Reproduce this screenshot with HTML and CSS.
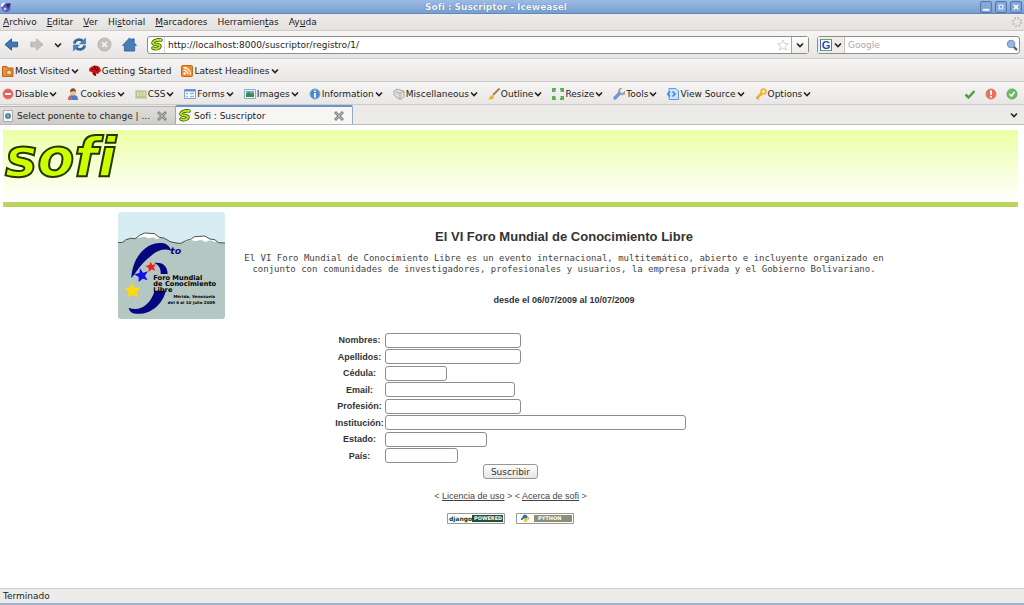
FILE: index.html
```html
<!DOCTYPE html>
<html lang="es">
<head>
<meta charset="utf-8">
<title>Sofi : Suscriptor</title>
<link rel="stylesheet" href="styles.css">
</head>
<body>
<svg class="defs" aria-hidden="true">
  <symbol id="chev" viewBox="0 0 8 6"><path d="M1 1.500l3 3 3-3" fill="none" stroke="#222" stroke-width="1.600"/></symbol>
  <symbol id="sofi" viewBox="0 0 12 13"><path d="M10 2C7 1 2 3 2 5s7 1 7 3-4 4-7 2" fill="none" stroke="#344800" stroke-width="3.400" stroke-linecap="round"/><path d="M10 2C7 1 2 3 2 5s7 1 7 3-4 4-7 2" fill="none" stroke="#b9ee12" stroke-width="2" stroke-linecap="round"/></symbol>
  <symbol id="cross" viewBox="0 0 10 10"><path d="M2 2l6 6M8 2L2 8" stroke="#8b8e88" stroke-width="3" stroke-linecap="square"/><path d="M2 2l6 6M8 2L2 8" stroke="#b5b8b1" stroke-width="1"/></symbol>
</svg>

<header class="titlebar">
  <svg class="app-icon" viewBox="0 0 12 12"><circle cx="6" cy="6.500" r="4.500" fill="#5b55b8"/><path d="M1 5C1 2 4 1 6 2c-2 1-3 2-3 4z" fill="#fff"/><path d="M6 4c2-2 4-2 5-1-1 1-1 3-3 4z" fill="#2c2a86"/><circle cx="5" cy="8" r="1.500" fill="#c8c6f2"/></svg>
  <span class="window-title">Sofi : Suscriptor - Iceweasel</span>
  <div class="window-buttons">
    <button aria-label="Minimizar"><svg viewBox="0 0 11 11"><path d="M2 8.500h7" stroke="#fff" stroke-width="2"/></svg></button>
    <button aria-label="Maximizar"><svg viewBox="0 0 11 11"><path d="M3.500 3.500h4v4h-4z" fill="none" stroke="#dce9fa" stroke-width="1.500"/></svg></button>
    <button aria-label="Cerrar"><svg viewBox="0 0 11 11"><path d="M3 3l5 5M8 3L3 8" stroke="#fff" stroke-width="1.800"/></svg></button>
  </div>
</header>

<nav class="menubar">
  <button><u>A</u>rchivo</button>
  <button><u>E</u>ditar</button>
  <button><u>V</u>er</button>
  <button>Hi<u>s</u>torial</button>
  <button><u>M</u>arcadores</button>
  <button>Herramien<u>t</u>as</button>
  <button>Ay<u>u</u>da</button>
  <svg class="throbber" viewBox="0 0 12 12"><circle cx="6" cy="6" r="4" fill="none" stroke="#b9b7b4" stroke-width="2" stroke-dasharray="1.600 1.540"/></svg>
</nav>

<div class="navbar">
  <div class="nav-buttons">
    <button aria-label="Atrás"><svg viewBox="0 0 16 16"><path d="M1 8l7-6v3.500h6.500v5H8V14z" fill="#3f78b5" stroke="#275686"/></svg></button>
    <button class="forward" aria-label="Adelante"><svg viewBox="0 0 16 16"><path d="M15 8L8 2v3.500H2v5h6V14z" fill="#c3c2c0" stroke="#b4b3b1"/></svg></button>
    <button class="history" aria-label="Historial reciente"><svg class="chev"><use href="#chev"/></svg></button>
    <button aria-label="Recargar"><svg viewBox="0 0 16 16"><path d="M2.500 7C3 2.500 9 1.500 11.500 4.500M13.500 9C13 13.500 7 14.500 4.500 11.500" fill="none" stroke="#33699f" stroke-width="3"/><path d="M14.500 1v6.500H8zM1.500 15V8.500H8z" fill="#4b83bd" stroke="#33699f" stroke-width=".5"/></svg></button>
    <button class="stop" aria-label="Detener"><svg viewBox="0 0 16 16"><circle cx="8" cy="8" r="7" fill="#c4c1c0" stroke="#b8b5b4"/><path d="M5.500 5.500l5 5M10.500 5.500l-5 5" stroke="#f2f1f0" stroke-width="2"/></svg></button>
    <button class="home" aria-label="Inicio"><svg viewBox="0 0 16 16"><path d="M8 1l2.500 2.500V2h2.500v4l2.500 3h-2v6h-11V9h-2z" fill="#467db9" stroke="#2c5a8d" stroke-width=".8"/></svg></button>
  </div>
  <div class="urlbar">
    <svg class="favicon"><use href="#sofi"/></svg>
    <input type="text" aria-label="Dirección" value="http://localhost:8000/suscriptor/registro/1/">
    <button class="star" aria-label="Añadir a marcadores"><svg viewBox="0 0 14 14"><path d="M7 1l1.700 4.200 4.500.3-3.500 2.900 1.200 4.500L7 10.400l-3.900 2.500 1.200-4.500L.8 5.500l4.500-.3z" fill="#fff" stroke="#c9c9c9"/></svg></button>
    <button class="url-drop" aria-label="Mostrar direcciones"><svg class="chev"><use href="#chev"/></svg></button>
  </div>
  <div class="searchbar">
    <button class="engine" aria-label="Motor de búsqueda"><span class="g-icon">G</span><svg class="chev"><use href="#chev"/></svg></button>
    <input type="text" aria-label="Buscar" placeholder="Google">
    <button class="go" aria-label="Buscar ahora"><svg viewBox="0 0 13 13"><path d="M8 8l4 4" stroke="#666" stroke-width="2.500"/><circle cx="5.500" cy="5.500" r="4" fill="#8dbaf0" stroke="#8697b5" stroke-width="1.300"/></svg></button>
  </div>
</div>

<div class="bookmarks">
  <button><svg class="ico" viewBox="0 0 12 12"><path d="M.5 1.500H5L6 3h5v8.500H.5z" fill="#e88b3a" stroke="#bd6317"/><circle cx="7" cy="7.500" r="2.500" fill="#f7d6a4" stroke="#b66a2a"/></svg><span>Most Visited</span><svg class="chev"><use href="#chev"/></svg></button>
  <button><svg class="ico" viewBox="0 0 12 12"><path d="M0 4l2-2 3-1.500 4 .5 2 2 1 3-2 1.500L9 9 7 8.500l-.5 2.500L4 10 3 7 .5 6.500z" fill="#d01012"/><path d="M2 3l2 2M5.500 1l1 4M9 2L7.500 6M5 8l2 3" stroke="#380000" stroke-width="1"/></svg><span>Getting Started</span></button>
  <button><svg class="ico" viewBox="0 0 12 12"><rect x=".5" y=".5" width="11" height="11" rx="1" fill="#f4862b" stroke="#cc681b"/><circle cx="3.500" cy="8.500" r="1.200" fill="#fff"/><path d="M2.500 5.200a4.200 4.200 0 0 1 4.300 4.300M2.500 2.500a7 7 0 0 1 7 7" fill="none" stroke="#fff" stroke-width="1.300"/></svg><span>Latest Headlines</span><svg class="chev"><use href="#chev"/></svg></button>
</div>

<div class="devbar">
  <button><svg class="ico" viewBox="0 0 12 12"><circle cx="6" cy="6" r="5" fill="#e96052" stroke="#e08078"/><path d="M3 6h6" stroke="#fff" stroke-width="2"/></svg><span>Disable</span><svg class="chev"><use href="#chev"/></svg></button>
  <button><svg class="ico" viewBox="0 0 12 12"><path d="M1 12c0-4 2-5 5-5s5 1 5 5z" fill="#477fce"/><circle cx="6" cy="4.500" r="3" fill="#f2be8d"/><path d="M3 4c0-5 6-5 6 0L7 3z" fill="#874b22"/><path d="M1 9h4v3H1z" fill="#e2604e"/></svg><span>Cookies</span><svg class="chev"><use href="#chev"/></svg></button>
  <button><svg class="ico" viewBox="0 0 12 12"><path d="M.5 2.500h11v8H.5z" fill="#b9c78f" stroke="#cfd5b5"/><path d="M2 5h8M2 7h8" stroke="#edf2da" stroke-dasharray="2 1"/></svg><span>CSS</span><svg class="chev"><use href="#chev"/></svg></button>
  <button><svg class="ico" viewBox="0 0 12 12"><path d="M.5 1.500h11v9H.5z" fill="#fff" stroke="#7ea0d4"/><path d="M1 2.500h10" stroke="#5d8dd2" stroke-width="2"/><path d="M2 5.500h2M2 8.500h2M6 5.500h4M6 8.500h4" stroke="#8eb0de" stroke-width="1.500"/></svg><span>Forms</span><svg class="chev"><use href="#chev"/></svg></button>
  <button><svg class="ico" viewBox="0 0 12 12"><path d="M.5 1.500h11v9H.5z" fill="#eef4fb" stroke="#8ba9cf"/><path d="M2 3h8v6H2z" fill="#6ea1df"/><path d="M2 9V6l3-2 2 2 3-1v4z" fill="#3b8d36"/></svg><span>Images</span><svg class="chev"><use href="#chev"/></svg></button>
  <button><svg class="ico" viewBox="0 0 12 12"><circle cx="6" cy="6" r="5" fill="#4d8bce" stroke="#7ba7d6"/><path d="M6 2.500v1.500M6 5v4.500" stroke="#fff" stroke-width="1.800"/></svg><span>Information</span><svg class="chev"><use href="#chev"/></svg></button>
  <button><svg class="ico" viewBox="0 0 12 12"><path d="M1 3l3-2 3 1 4 1v6l-4 2.500L3 9 1 7z" fill="#dedddd" stroke="#aaa"/><path d="M3 4l4 1.500L11 3M7 5.500V11" fill="none" stroke="#aaa"/></svg><span>Miscellaneous</span><svg class="chev"><use href="#chev"/></svg></button>
  <button><svg class="ico" viewBox="0 0 12 12"><path d="M11.500.5L5 7" stroke="#a47a43" stroke-width="1.800"/><path d="M0 11c2 0 2-4 4-4l2 2c0 2-3 3-6 2z" fill="#e9b52d"/></svg><span>Outline</span><svg class="chev"><use href="#chev"/></svg></button>
  <button><svg class="ico" viewBox="0 0 12 12"><path d="M0 0h4v1.500L3 3 4 4H0zM8 0h4v4H8l1-1-1-1.500zM0 8h4L3 9l1 1.500V12H0zM8 8h4v4H8v-1.500L9 9z" fill="#62ab5e"/></svg><span>Resize</span><svg class="chev"><use href="#chev"/></svg></button>
  <button><svg class="ico" viewBox="0 0 12 12"><path d="M9 0L7 2v3l3 0 2-2v3L9 7 6 6 5 5l1-4z" fill="#aaa" stroke="#888" stroke-width=".5"/><path d="M2 10l4-4" stroke="#6f98dc" stroke-width="3.500" stroke-linecap="round"/></svg><span>Tools</span><svg class="chev"><use href="#chev"/></svg></button>
  <button><svg class="ico" viewBox="0 0 12 12"><path d="M2 .5h7L11.500 3v8.500H2z" fill="#cfe3fa" stroke="#5d9be2"/><path d="M3 3.500L.5 6 3 8.500M5.500 3.500L8 6 5.500 8.500" fill="none" stroke="#3585e0" stroke-width="1.500"/></svg><span>View Source</span><svg class="chev"><use href="#chev"/></svg></button>
  <button><svg class="ico" viewBox="0 0 12 12"><path d="M1.500 10.500L7 5" stroke="#eeae2d" stroke-width="2.500"/><path d="M2 10l2 1.500" stroke="#d6911a"/><circle cx="8.500" cy="3.500" r="2.300" fill="#fff" stroke="#efb63a" stroke-width="2"/></svg><span>Options</span><svg class="chev"><use href="#chev"/></svg></button>
  <div class="dev-status">
    <svg class="ico" viewBox="0 0 12 12"><path d="M1.500 6.500L4.500 9.500 10.500 3" fill="none" stroke="#4ba347" stroke-width="2.500"/></svg>
    <svg class="ico" viewBox="0 0 12 12"><circle cx="6" cy="6" r="5" fill="#ef6b59" stroke="#e8776a"/><path d="M6 2.500v4.500M6 8v1.500" stroke="#fff" stroke-width="2"/></svg>
    <svg class="ico" viewBox="0 0 12 12"><circle cx="6" cy="6" r="5" fill="#6cba64" stroke="#5fad58"/><path d="M3.500 6l2 2 3-4" fill="none" stroke="#fff" stroke-width="1.500"/></svg>
  </div>
</div>

<div class="tabs">
  <button class="tab">
    <svg class="ico" viewBox="0 0 12 12"><path d="M1.500.5h9v11h-9z" fill="#f4f6f6" stroke="#aaa"/><circle cx="6" cy="6" r="3" fill="#5287ad"/><path d="M5 4l2 1-1 3z" fill="#9bc491"/></svg>
    <span>Select ponente to change | ...</span><svg class="close"><use href="#cross"/></svg>
  </button>
  <button class="tab active">
    <svg class="favicon"><use href="#sofi"/></svg>
    <span>Sofi : Suscriptor</span><svg class="close"><use href="#cross"/></svg>
  </button>
  <button class="all-tabs" aria-label="Listar pestañas"><svg class="chev"><use href="#chev"/></svg></button>
</div>

<main class="page">
  <div class="banner"><span class="logo">sofi</span></div>

  <section class="event">
    <svg class="poster" viewBox="24 21 321 321" role="img" aria-label="6to Foro Mundial de Conocimiento Libre">
      <rect x="24" y="21" width="321" height="321" rx="10" fill="#d7edf3"/>
      <path d="M24 113L38 112 48 104 62 100 76 101 90 90 104 84 134 86 146 96 164 100 180 110 198 114 212 115 230 106 242 103 254 95 284 93 300 102 314 104 326 113 345 114V332a10 10 0 0 1-10 10H34a10 10 0 0 1-10-10z" fill="#b5c7c3"/>
      <path d="M80 99L90 90 104 84 134 86 146 96 160 100 150 99 140 103 130 97 116 100 104 95zM219 112L230 106 242 103 254 95 284 93 300 102 314 104 324 111 312 110 300 106 286 111 272 104 258 109 242 105z" fill="#fff"/>
      <path d="M24 113L38 112 48 104 62 100 76 101 90 90 104 84 134 86 146 96 164 100 180 110 198 114 212 115 230 106 242 103 254 95 284 93 300 102 314 104 326 113 345 114" fill="none" stroke="#333" stroke-width="2.500"/>
      <path d="M64 220C67 155 110 109 156 114c14 2 24 10 27 23-20-8-40-1-56 12-28 21-42 42-63 71z" fill="#06067f"/>
      <path d="M132 174c26-5 41 10 41 33h-21c1-15-4-27-20-33zM134 257h34c-12 46-52 74-91 69-12-1-19-7-21-18 33 14 66-10 78-51z" fill="#06067f"/>
      <path d="M122 170l5 10 11-2-7 9 5 10-11-4-9 8v-12l-10-6 12-3z" fill="#f81819"/>
      <path d="M90 190l9 13 15-4-9 13 8 14-15-5-12 10 0-15-14-8 16-4z" fill="#1010ed"/>
      <path d="M67 233l7 15 18 0-13 13 5 17-16-9-15 9 3-18-13-12 18-1z" fill="#ffdc08"/>
      <text class="poster-to" x="181" y="148">to</text>
      <g class="poster-name"><text x="130" y="224">Foro Mundial</text><text x="130" y="242">de Conocimiento</text><text x="130" y="261">Libre</text></g>
      <g class="poster-date"><text x="315" y="280">Mérida, Venezuela</text><text x="315" y="297">del 6 al 10 julio 2009</text></g>
    </svg>
    <div class="event-text">
      <h1>El VI Foro Mundial de Conocimiento Libre</h1>
      <p class="summary">El VI Foro Mundial de Conocimiento Libre es un evento internacional, multitemático, abierto e incluyente organizado en conjunto con comunidades de investigadores, profesionales y usuarios, la empresa privada y el Gobierno Bolivariano.</p>
      <p class="dates">desde el 06/07/2009 al 10/07/2009</p>
    </div>
  </section>

  <form class="register">
    <table>
      <tr><th><label for="nombres">Nombres:</label></th><td><input class="w-name" id="nombres" type="text"></td></tr>
      <tr><th><label for="apellidos">Apellidos:</label></th><td><input class="w-name" id="apellidos" type="text"></td></tr>
      <tr><th><label for="cedula">Cédula:</label></th><td><input class="w-id" id="cedula" type="text"></td></tr>
      <tr><th><label for="email">Email:</label></th><td><input class="w-email" id="email" type="text"></td></tr>
      <tr><th><label for="profesion">Profesión:</label></th><td><input class="w-name" id="profesion" type="text"></td></tr>
      <tr><th><label for="institucion">Institución:</label></th><td><input class="w-org" id="institucion" type="text"></td></tr>
      <tr><th><label for="estado">Estado:</label></th><td><input class="w-state" id="estado" type="text"></td></tr>
      <tr><th><label for="pais">País:</label></th><td><input class="w-country" id="pais" type="text"></td></tr>
    </table>
    <button type="submit">Suscribir</button>
  </form>

  <footer class="foot">
    <p>&lt; <a href="#licencia">Licencia de uso</a> &gt; &lt; <a href="#acerca">Acerca de sofi</a> &gt;</p>
    <div class="badges">
      <svg class="badge" viewBox="0 0 58 11" role="img" aria-label="django powered"><path d="M.5.500h57v10H.5z" fill="#fff" stroke="#999"/><path d="M25 2h31v7H25z" fill="#234f32"/><text class="b-django" x="2" y="8">django</text><text class="b-small" x="27" y="7">POWERED</text></svg>
      <svg class="badge" viewBox="0 0 58 11" role="img" aria-label="python"><path d="M.5.500h57v10H.5z" fill="#fff" stroke="#999"/><path d="M18 2h38v7H18z" fill="#8b8f78"/><path d="M7 5V3q2-2 4 0v2H8q-2 0-2 2-2-2 1-2z" fill="#356d9e" stroke="#356d9e"/><path d="M12 4q3 1 0 3h-1v1q-2 2-3 0V6h3q1 0 1-2z" fill="#f3c637" stroke="#f3c637" stroke-width=".5"/><text class="b-small" x="22" y="7">PYTHON</text></svg>
    </div>
  </footer>
</main>

<div class="statusbar">Terminado</div>
</body>
</html>
```
FILE: styles.css
```css
* { box-sizing: border-box; }

body {
  margin: 0;
  min-height: 100vh;
  display: flex;
  flex-direction: column;
  background: #fff;
  font: 9px/12px "DejaVu Sans", sans-serif;
  color: #1c1c1c;
}

button, input { font: inherit; color: inherit; margin: 0; }
button { padding: 0; border: 0; background: none; white-space: nowrap; }
svg { display: block; flex: none; }
.defs { position: absolute; width: 0; height: 0; }
.chev { width: 8px; height: 6px; }
.ico { width: 12px; height: 12px; }
.favicon { width: 12px; height: 13px; }

.titlebar {
  display: flex;
  align-items: center;
  height: 14px;
  padding: 0 2px 0 0;
  background: linear-gradient(#9cbce6, #799ecf);
  border-bottom: 1px solid #5f88bd;
}
.app-icon { width: 12px; height: 12px; }
.window-title {
  flex: 1;
  text-align: center;
  font-weight: bold;
  color: #f4f8ff;
  text-shadow: 0 0 1px #35557f;
}
.window-buttons { display: flex; gap: 3px; }
.window-buttons button { width: 12px; height: 12px; border: 1px solid #4f78ad; border-radius: 2px; background: #82a7d8; }
.window-buttons svg { width: 10px; height: 10px; }

.menubar {
  display: flex;
  align-items: center;
  gap: 10px;
  height: 17px;
  padding: 0 1px 0 3px;
  background: linear-gradient(#edecea, #e3e2e0);
  border-bottom: 1px solid #cdcbc8;
}
.throbber { width: 12px; height: 12px; margin-left: auto; }

.navbar {
  display: flex;
  align-items: center;
  gap: 8px;
  height: 28px;
  padding: 0 4px;
  background: linear-gradient(#f7f6f5, #e6e5e3);
  border-bottom: 1px solid #cdcbc8;
}
.nav-buttons { display: flex; align-items: center; gap: 10px; width: 135px; }
.nav-buttons svg:not(.chev) { width: 15px; height: 15px; }
.urlbar, .searchbar {
  display: flex;
  align-items: center;
  height: 18px;
  border: 1px solid #8f8d8a;
  border-radius: 3px;
  background: #fff;
}
.urlbar { flex: 1; padding-left: 3px; }
.urlbar input, .searchbar input { flex: 1; min-width: 0; height: 16px; padding: 0 3px; border: 0; background: none; outline: 0; }
.urlbar input { margin-left: 1px; border-left: 1px solid #ddd; }
.star svg { width: 12px; height: 12px; margin-right: 2px; }
.url-drop { display: grid; place-items: center; width: 17px; height: 16px; border-left: 1px solid #a8a6a3; background: linear-gradient(#fff, #ececea); }
.searchbar { width: 203px; padding-right: 1px; }
.searchbar input::placeholder { color: #aaa; opacity: 1; }
.engine { display: flex; align-items: center; gap: 2px; width: 27px; height: 16px; padding-left: 2px; border-right: 1px solid #c4c2bf; background: #eeedeb; }
.g-icon { width: 12px; height: 12px; border: 1px solid #65a958; border-right-color: #df5140; border-left-color: #3a69cf; background: #fff; color: #2449b8; font: bold 11px/10px "Liberation Sans", sans-serif; }
.go svg { width: 12px; height: 12px; }

.bookmarks, .devbar {
  display: flex;
  align-items: center;
  gap: 10px;
  height: 23px;
  padding: 2px 6px 0 2px;
  background: linear-gradient(#f6f5f4, #e8e7e5);
  border-bottom: 1px solid #cdcbc8;
}
.bookmarks button, .devbar button { display: flex; align-items: center; gap: 1px; }
.dev-status { display: flex; gap: 9px; margin-left: auto; }

.tabs {
  display: flex;
  align-items: flex-end;
  height: 20px;
  background: #edebe9;
  border-bottom: 1px solid #bdb9b6;
}
.tab {
  display: flex;
  align-items: center;
  gap: 3px;
  width: 175px;
  height: 18px;
  padding: 0 8px 0 2px;
  border-top: 1px solid #b5b2af;
  background: linear-gradient(#e0dedc, #cfcdca);
  text-align: left;
}
.tab span { flex: 1; }
.tab.active {
  width: 178px;
  height: 19px;
  padding: 0 8px 0 3px;
  border: 1px solid #91a9cb;
  border-top: 2px solid #6b94cb;
  border-bottom: 0;
  border-radius: 2px 2px 0 0;
  background: #f7f6f5;
}
.close { width: 10px; height: 10px; }
.all-tabs { margin: 0 6px 6px auto; }

.page {
  flex: 1;
  padding: 5px 6px 0 3px;
  font-family: "Liberation Sans", Arial, sans-serif;
  color: #333;
}
.banner {
  height: 77px;
  border-bottom: 5px solid #bbd45c;
  background: linear-gradient(#ecffa6, #fff);
}
.logo {
  display: block;
  padding: 0 2px;
  font: italic bold 54px/56px "DejaVu Sans", sans-serif;
  color: #cf0;
  -webkit-text-stroke: 2px #263600;
}

.event { display: flex; max-width: 785px; margin: 5px auto 0; }
.poster { width: 107px; height: 107px; font-family: "DejaVu Sans", sans-serif; font-weight: bold; }
.poster-to { font-size: 28px; font-style: italic; fill: #06067f; }
.poster-name { font-size: 20px; }
.poster-date { font-size: 12px; text-anchor: end; }
.event-text { flex: 1; text-align: center; }
h1 { margin: 16px 0 8px; font-size: 13px; line-height: 17px; }
.summary { margin: 0; font: 9px/11px "DejaVu Sans Mono", monospace; color: #444; }
.dates { margin: 19px 0 0; font-weight: bold; line-height: 12px; }

.register { display: flex; flex-direction: column; align-items: center; margin-top: 13px; }
.register table { height: 132px; border-collapse: collapse; }
th { padding: 0 1px 0 0; min-width: 50px; text-align: center; }
td { padding: 0; }
td input {
  display: block;
  height: 15px;
  border: 1px solid #8f8d8a;
  border-radius: 3px;
  background: #fff;
}
.w-name { width: 136px; }
.w-id { width: 62px; }
.w-email { width: 130px; }
.w-org { width: 301px; }
.w-state { width: 102px; }
.w-country { width: 73px; }
.register button {
  height: 15px;
  padding: 0 7px;
  border: 1px solid #999794;
  border-radius: 3px;
  background: linear-gradient(#fff, #e6e5e3);
  font-family: "DejaVu Sans", sans-serif;
  line-height: 12px;
}

.foot { text-align: center; color: #555; }
.foot p { margin: 11px 0; line-height: 12px; }
.foot a { color: #444; }
.badges { display: flex; justify-content: center; gap: 11px; }
.badge { width: 58px; height: 11px; font-family: "DejaVu Sans", sans-serif; font-weight: bold; }
.b-django { font-size: 6px; fill: #143b24; }
.b-small { font-size: 5px; fill: #fff; }

.statusbar {
  height: 17px;
  padding: 1px 3px;
  background: #edecea;
  border-top: 1px solid #cfcdca;
  border-bottom: 2px solid #9fb2cc;
}
```
